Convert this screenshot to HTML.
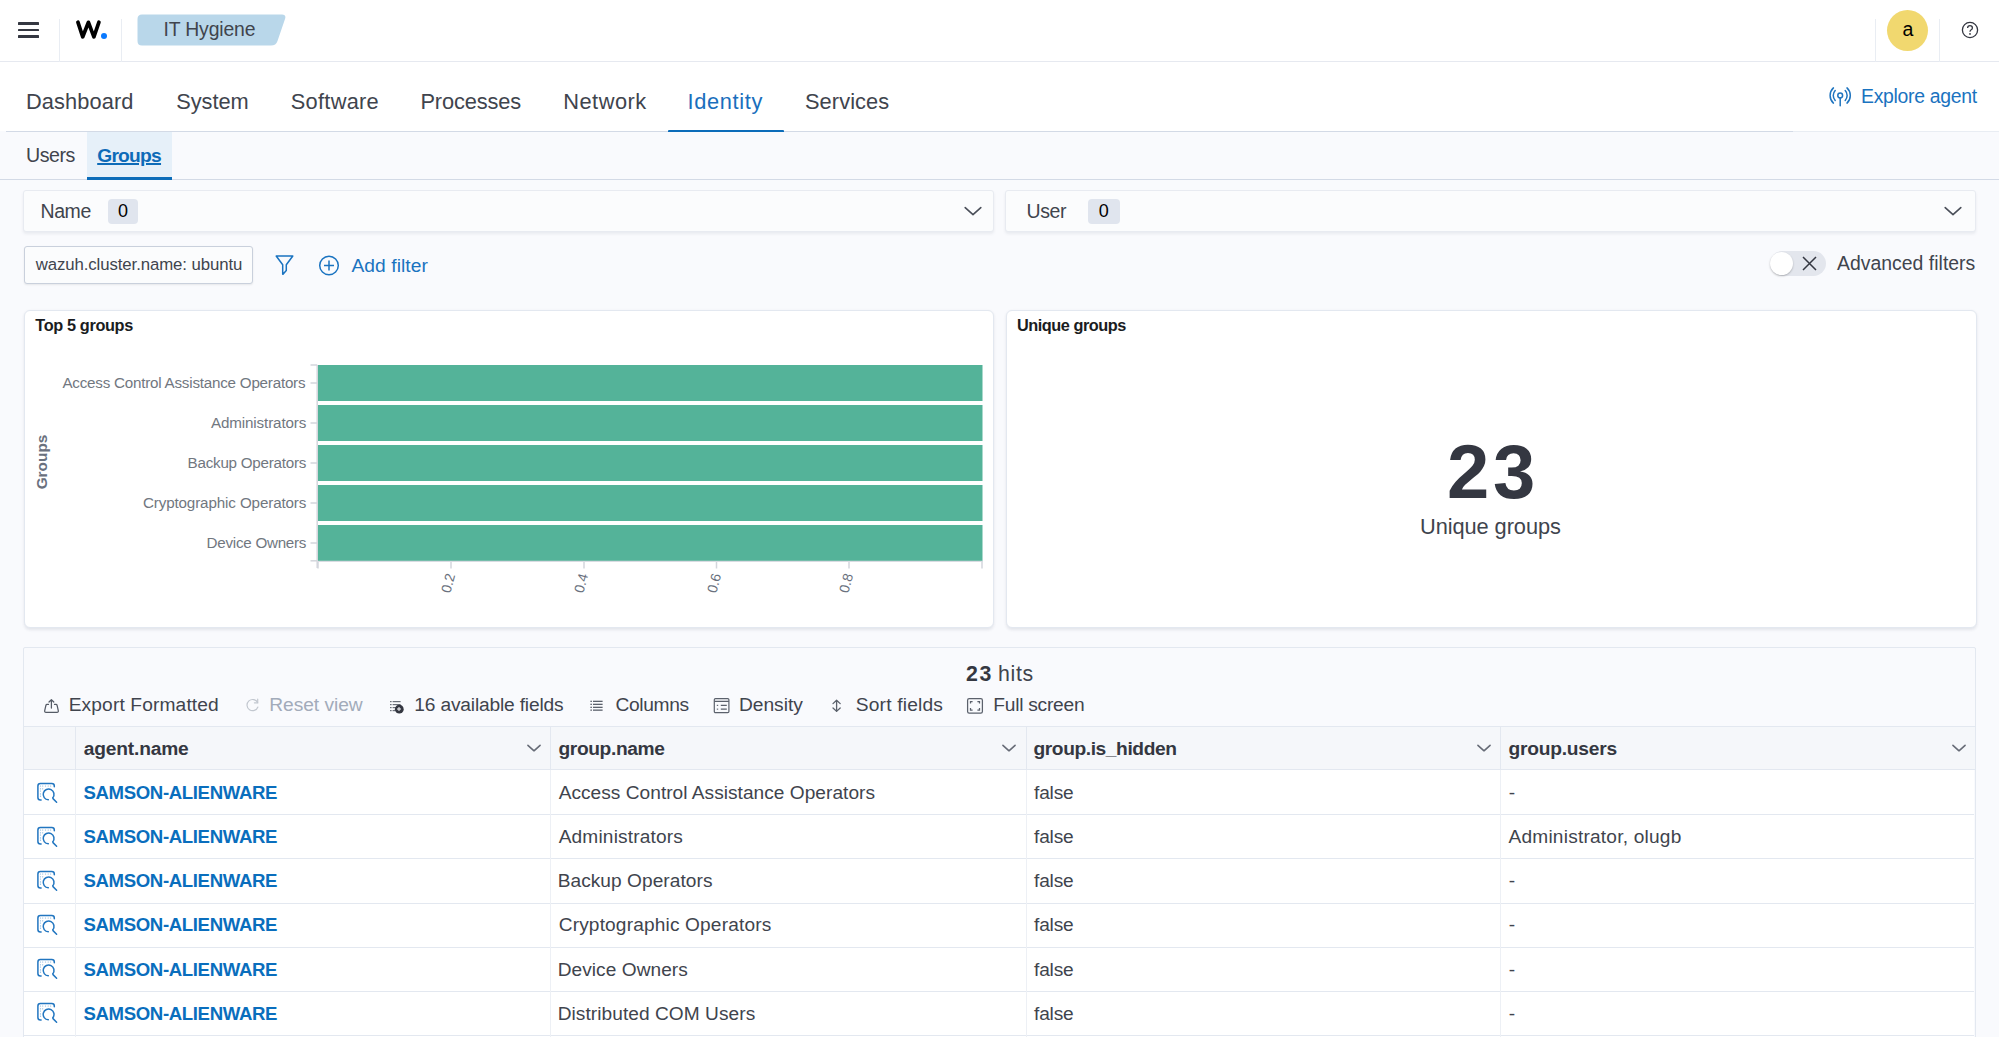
<!DOCTYPE html>
<html><head><meta charset="utf-8"><title>IT Hygiene</title>
<style>
html,body{margin:0;padding:0;}
body{width:1999px;height:1037px;overflow:hidden;position:relative;background:#f9fafd;font-family:"Liberation Sans",sans-serif;}
.t{position:absolute;white-space:nowrap;line-height:1;}
.b{position:absolute;}
</style></head><body>
<div class="b" style="left:0px;top:0px;width:1999px;height:61.2px;background:#fff;"></div>
<div class="b" style="left:0px;top:61.2px;width:1999px;height:1.6px;background:#e6e9f0;"></div>
<div class="b" style="left:18px;top:22.3px;width:21px;height:2.6px;background:#343741;border-radius:0.6px;"></div>
<div class="b" style="left:18px;top:28.8px;width:21px;height:2.6px;background:#343741;border-radius:0.6px;"></div>
<div class="b" style="left:18px;top:35.3px;width:21px;height:2.6px;background:#343741;border-radius:0.6px;"></div>
<div class="b" style="left:59px;top:19px;width:1px;height:43px;background:#e9edf3;"></div>
<div class="b" style="left:121px;top:19px;width:1px;height:43px;background:#e9edf3;"></div>
<svg class="b" style="left:0;top:0" width="120" height="60" viewBox="0 0 120 60"><path d="M77.9 22.2 L82.75 36.8 L88.45 22.3 L93.9 36.8 L98.95 22.2" fill="none" stroke="#000" stroke-width="3.7" stroke-linecap="round" stroke-linejoin="round"/></svg>
<div class="b" style="left:100.7px;top:32.9px;width:6.2px;height:6.2px;background:#0a79ff;border-radius:50%;"></div>
<svg class="b" style="left:137px;top:14px" width="152" height="32" viewBox="0 0 152 32"><path d="M5 0.5 H145 Q149.5 0.5 148 5 L140.5 27 Q139 31.5 134 31.5 H5 Q0.5 31.5 0.5 27 V5 Q0.5 0.5 5 0.5 Z" fill="#b9d7ea"/></svg>
<div class="t tt" style="left:163.50px;top:20.01px;font-size:19.4px;color:#40444d;letter-spacing:-0.164px;">IT Hygiene</div><div class="b" style="left:1875px;top:19px;width:1px;height:43px;background:#e9edf3;"></div>
<div class="b" style="left:1939px;top:19px;width:1px;height:43px;background:#e9edf3;"></div>
<div class="b" style="left:1887px;top:9.5px;width:41px;height:41px;background:#f1d86f;border-radius:50%;"></div>
<div class="t tt" style="left:1902.40px;top:20.21px;font-size:19.5px;color:#000;">a</div><svg class="b" style="left:1961px;top:21px" width="18" height="18" viewBox="0 0 18 18"><circle cx="9" cy="9" r="7.6" fill="none" stroke="#343741" stroke-width="1.3"/><path d="M6.6 7.1 Q6.6 4.7 9 4.7 Q11.4 4.7 11.4 6.9 Q11.4 8.3 9.9 9 Q9 9.5 9 10.8" fill="none" stroke="#343741" stroke-width="1.3"/><circle cx="9" cy="12.9" r="0.9" fill="#343741"/></svg>
<div class="b" style="left:0px;top:62px;width:1999px;height:69px;background:#fff;"></div>
<div class="b" style="left:6px;top:130.8px;width:1787px;height:1.4px;background:#d3dae6;"></div>
<div class="b" style="left:1793px;top:130.8px;width:206px;height:1.4px;background:#e9edf3;"></div>
<div class="t tt" style="left:26.00px;top:90.71px;font-size:21.8px;color:#40444d;letter-spacing:0.099px;">Dashboard</div><div class="t tt" style="left:176.20px;top:90.71px;font-size:21.8px;color:#40444d;letter-spacing:-0.043px;">System</div><div class="t tt" style="left:290.80px;top:90.71px;font-size:21.8px;color:#40444d;letter-spacing:0.272px;">Software</div><div class="t tt" style="left:420.40px;top:90.71px;font-size:21.8px;color:#40444d;letter-spacing:-0.132px;">Processes</div><div class="t tt" style="left:563.25px;top:90.71px;font-size:21.8px;color:#40444d;letter-spacing:0.493px;">Network</div><div class="t tt" style="left:687.50px;top:90.71px;font-size:21.8px;color:#1a6fbd;letter-spacing:0.660px;">Identity</div><div class="t tt" style="left:805.00px;top:90.71px;font-size:21.8px;color:#40444d;letter-spacing:0.081px;">Services</div><div class="b" style="left:668px;top:130px;width:116px;height:2.5px;background:#0b6cb9;border-radius:1px;"></div>
<svg class="b" style="left:1829px;top:87px" width="23" height="20" viewBox="0 0 23 20"><g fill="none" stroke="#1f74bf" stroke-width="1.5" stroke-linecap="round"><path d="M4.4 0.9 A10.4 10.4 0 0 0 4.4 16.1"/><path d="M18 0.9 A10.4 10.4 0 0 1 18 16.1"/><path d="M6.2 3.6 A7.17 7.17 0 0 0 6.2 13.4"/><path d="M16.2 3.6 A7.17 7.17 0 0 1 16.2 13.4"/><circle cx="11.2" cy="8.5" r="2.4"/><path d="M11.2 10.9 V18.8"/></g></svg>
<div class="t tt" style="left:1861.00px;top:86.60px;font-size:19.4px;color:#1a73c0;letter-spacing:-0.298px;">Explore agent</div><div class="b" style="left:0px;top:132px;width:1999px;height:47px;background:#f9fafd;"></div>
<div class="b" style="left:87px;top:132px;width:85px;height:46px;background:#e6f0f9;"></div>
<div class="b" style="left:0px;top:178.8px;width:1999px;height:1.4px;background:#d3dae6;"></div>
<div class="b" style="left:87px;top:177px;width:85px;height:3px;background:#0b6cb9;"></div>
<div class="t tt" style="left:26.00px;top:146.21px;font-size:19.6px;color:#40444d;letter-spacing:-0.467px;">Users</div><div class="t tt" style="left:97.20px;top:146.20px;font-size:19.2px;color:#0d6bb8;font-weight:bold;letter-spacing:-0.731px;text-decoration:underline;text-underline-offset:1px;text-decoration-thickness:1.5px;">Groups</div><div class="b" style="left:23.2px;top:190px;width:970.5px;height:42px;background:#fbfcfd;border:1px solid #e8ebf1;border-radius:3px;box-shadow:0 2px 3px rgba(50,60,90,0.08);box-sizing:border-box;"></div>
<div class="b" style="left:1004.7px;top:190px;width:971px;height:42px;background:#fbfcfd;border:1px solid #e8ebf1;border-radius:3px;box-shadow:0 2px 3px rgba(50,60,90,0.08);box-sizing:border-box;"></div>
<div class="t tt" style="left:40.50px;top:201.61px;font-size:19.5px;color:#40444d;letter-spacing:-0.424px;">Name</div><div class="b" style="left:108px;top:198.5px;width:30px;height:25.5px;background:#e0e5ee;border-radius:4px;"></div>
<div class="t tt" style="left:123px;transform:translateX(-50%);top:202.21px;font-size:18px;color:#000;">0</div><div class="t tt" style="left:1026.50px;top:201.61px;font-size:19.5px;color:#40444d;letter-spacing:-0.392px;">User</div><div class="b" style="left:1088px;top:198.5px;width:31.5px;height:25.5px;background:#e0e5ee;border-radius:4px;"></div>
<div class="t tt" style="left:1103.7px;transform:translateX(-50%);top:202.21px;font-size:18px;color:#000;">0</div><svg class="b" style="left:964px;top:206px" width="18" height="10" viewBox="0 0 18 10"><path d="M1.2 1.6 L9 8.6 L16.8 1.6" fill="none" stroke="#4a4f59" stroke-width="1.6" stroke-linecap="round" stroke-linejoin="round"/></svg>
<svg class="b" style="left:1944px;top:206px" width="18" height="10" viewBox="0 0 18 10"><path d="M1.2 1.6 L9 8.6 L16.8 1.6" fill="none" stroke="#4a4f59" stroke-width="1.6" stroke-linecap="round" stroke-linejoin="round"/></svg>
<div class="b" style="left:24px;top:245.5px;width:229px;height:38px;background:#fbfcfd;border:1px solid #c9d0dc;border-radius:3px;box-shadow:0 1px 2px rgba(0,0,0,0.08);box-sizing:border-box;"></div>
<div class="t tt" style="left:35.70px;top:257.00px;font-size:16.8px;color:#40444d;letter-spacing:-0.093px;">wazuh.cluster.name: ubuntu</div><svg class="b" style="left:274px;top:254px" width="21" height="22" viewBox="0 0 21 22"><path d="M2.2 2 H18.8 L12.3 10.8 V16.5 L9.2 20 Q8.8 20.5 8.7 19.8 V10.8 Z" fill="none" stroke="#1a73c0" stroke-width="1.5" stroke-linejoin="round"/></svg>
<svg class="b" style="left:318px;top:255px" width="22" height="22" viewBox="0 0 22 22"><circle cx="11" cy="10.5" r="9.3" fill="none" stroke="#1a73c0" stroke-width="1.5"/><path d="M11 5.5 V15.5 M6 10.5 H16" stroke="#1a73c0" stroke-width="1.5"/></svg>
<div class="t tt" style="left:351.50px;top:256.20px;font-size:19.2px;color:#1a73c0;letter-spacing:0.074px;">Add filter</div><div class="b" style="left:1770px;top:250.5px;width:56px;height:25px;background:#e3e6ed;border-radius:13px;"></div>
<div class="b" style="left:1770px;top:251.5px;width:23px;height:23px;background:#fff;border-radius:50%;box-shadow:0 1px 2px rgba(0,0,0,0.25);"></div>
<svg class="b" style="left:1802px;top:256px" width="15" height="15" viewBox="0 0 15 15"><path d="M1 1 L14 14 M14 1 L1 14" stroke="#343741" stroke-width="1.5"/></svg>
<div class="t tt" style="left:1837.00px;top:254.10px;font-size:19.4px;color:#40444d;letter-spacing:0.022px;">Advanced filters</div><div class="b" style="left:23.5px;top:310px;width:970.2px;height:318px;background:#fff;border:1px solid #e3e8f0;border-radius:6px;box-sizing:border-box;box-shadow:0 1.5px 3px rgba(40,50,80,0.10);"></div>
<div class="b" style="left:1005.5px;top:310px;width:971.5px;height:318px;background:#fff;border:1px solid #e3e8f0;border-radius:6px;box-sizing:border-box;box-shadow:0 1.5px 3px rgba(40,50,80,0.10);"></div>
<div class="t tt" style="left:35.30px;top:317.30px;font-size:16.3px;color:#1a1c21;font-weight:bold;letter-spacing:-0.359px;">Top 5 groups</div><div class="t tt" style="left:1017.00px;top:317.30px;font-size:16.3px;color:#1a1c21;font-weight:bold;letter-spacing:-0.464px;">Unique groups</div><svg class="b" style="left:0;top:0" width="1000" height="627" viewBox="0 0 1000 627"><g stroke="#d3d6dc" stroke-width="1.5"><path d="M317.2 365 V568"/><path d="M310.5 365 H317.2"/><path d="M310.5 383 H317.2"/><path d="M310.5 423 H317.2"/><path d="M310.5 463 H317.2"/><path d="M310.5 503 H317.2"/><path d="M310.5 543 H317.2"/><path d="M310.5 560.8 H317.2"/><path d="M318 561 V568.5"/><path d="M451 561 V568.5"/><path d="M584 561 V568.5"/><path d="M716.5 561 V568.5"/><path d="M849 561 V568.5"/><path d="M982 561 V568.5"/></g><rect x="318" y="365" width="664.5" height="36" fill="#54b399"/><rect x="318" y="405" width="664.5" height="36" fill="#54b399"/><rect x="318" y="445" width="664.5" height="36" fill="#54b399"/><rect x="318" y="485" width="664.5" height="36" fill="#54b399"/><rect x="318" y="525" width="664.5" height="36" fill="#54b399"/><path d="M317 561.3 H983" stroke="#d9dce2" stroke-width="1.3"/></svg>
<div class="t tt" style="left:62.40px;top:375.11px;font-size:15.2px;color:#71777f;letter-spacing:-0.222px;">Access Control Assistance Operators</div><div class="t tt" style="left:210.90px;top:415.11px;font-size:15.2px;color:#71777f;letter-spacing:-0.120px;">Administrators</div><div class="t tt" style="left:187.60px;top:455.11px;font-size:15.2px;color:#71777f;letter-spacing:-0.241px;">Backup Operators</div><div class="t tt" style="left:142.90px;top:495.11px;font-size:15.2px;color:#71777f;letter-spacing:-0.127px;">Cryptographic Operators</div><div class="t tt" style="left:206.60px;top:535.11px;font-size:15.2px;color:#71777f;letter-spacing:-0.265px;">Device Owners</div><div class="t" style="left:42px;top:462px;font-size:15.4px;font-weight:bold;color:#69707d;line-height:1;transform:translate(-50%,-50%) rotate(-90deg);">Groups</div>
<div class="t" style="left:448px;top:583px;font-size:14px;color:#69707d;line-height:1;transform:translate(-50%,-50%) rotate(-75deg);">0.2</div>
<div class="t" style="left:581px;top:583px;font-size:14px;color:#69707d;line-height:1;transform:translate(-50%,-50%) rotate(-75deg);">0.4</div>
<div class="t" style="left:713.5px;top:583px;font-size:14px;color:#69707d;line-height:1;transform:translate(-50%,-50%) rotate(-75deg);">0.6</div>
<div class="t" style="left:846px;top:583px;font-size:14px;color:#69707d;line-height:1;transform:translate(-50%,-50%) rotate(-75deg);">0.8</div>
<div class="t tt" style="left:1447.00px;top:434.40px;font-size:76px;color:#343741;font-weight:bold;letter-spacing:3.732px;">23</div><div class="t tt" style="left:1420.00px;top:515.61px;font-size:21.8px;color:#40444d;letter-spacing:-0.073px;">Unique groups</div><div class="b" style="left:23.3px;top:647.2px;width:1952.7px;height:400px;background:#f9fafd;border:1px solid #e3e8f0;border-radius:2px;box-sizing:border-box;"></div>
<div class="t tt" style="left:966.10px;top:664.30px;font-size:21.3px;color:#343741;font-weight:bold;letter-spacing:1.656px;">23</div><div class="t tt" style="left:998.10px;top:664.30px;font-size:21.3px;color:#40444d;letter-spacing:0.636px;">hits</div><div class="t tt" style="left:68.70px;top:695.40px;font-size:19.2px;color:#40444d;letter-spacing:0.123px;">Export Formatted</div><div class="t tt" style="left:269.30px;top:695.40px;font-size:19.2px;color:#a2abba;letter-spacing:-0.054px;">Reset view</div><div class="t tt" style="left:414.30px;top:695.40px;font-size:19.2px;color:#40444d;letter-spacing:-0.180px;">16 available fields</div><div class="t tt" style="left:615.50px;top:695.40px;font-size:19.2px;color:#40444d;letter-spacing:-0.353px;">Columns</div><div class="t tt" style="left:739.00px;top:695.40px;font-size:19.2px;color:#40444d;letter-spacing:-0.031px;">Density</div><div class="t tt" style="left:855.80px;top:695.40px;font-size:19.2px;color:#40444d;letter-spacing:0.178px;">Sort fields</div><div class="t tt" style="left:993.30px;top:695.40px;font-size:19.2px;color:#40444d;letter-spacing:-0.257px;">Full screen</div><svg class="b" style="left:43px;top:698px" width="18" height="16" viewBox="0 0 18 16"><g fill="none" stroke="#555b66" stroke-width="1.25" stroke-linecap="round" stroke-linejoin="round"><path d="M8.4 10 V1.6 M6 4 L8.4 1.6 L10.8 4"/><path d="M5.5 6.4 H4 Q3.1 6.4 2.9 7.3 L1.7 12.6 Q1.4 14.3 3 14.3 H14 Q15.6 14.3 15.3 12.6 L14.1 7.3 Q13.9 6.4 13 6.4 H11.5"/></g></svg>
<svg class="b" style="left:245px;top:698px" width="15" height="15" viewBox="0 0 15 15"><g fill="none" stroke="#c2c7cf" stroke-width="1.2" stroke-linecap="round"><path d="M12.6 4.5 A5.6 5.6 0 1 0 12.9 9"/><path d="M12.7 1.2 V4.8 H9.4"/></g></svg>
<svg class="b" style="left:389px;top:700px" width="16" height="14" viewBox="0 0 16 14"><g fill="#6b707a"><rect x="1" y="1" width="1.6" height="1.2"/><rect x="3.6" y="1" width="8" height="1.2"/><rect x="1" y="4" width="1.6" height="1.2"/><rect x="3.6" y="4" width="8" height="1.2"/><rect x="1" y="7" width="1.6" height="1.2"/><rect x="3.6" y="7" width="4" height="1.2"/><rect x="1" y="10" width="1.6" height="1.2"/><rect x="3.6" y="10" width="3" height="1.2"/></g><circle cx="10.3" cy="9.2" r="4.4" fill="#343741"/><path d="M10 7 V11 M8 9 H12" stroke="#f7f8fc" stroke-width="1"/></svg>
<svg class="b" style="left:590px;top:700px" width="14" height="12" viewBox="0 0 14 12"><g fill="#5b616c"><rect x="0.4" y="0.7" width="1.5" height="1.3"/><rect x="3" y="0.7" width="9.6" height="1.3"/><rect x="0.4" y="3.7" width="1.5" height="1.3"/><rect x="3" y="3.7" width="9.6" height="1.3"/><rect x="0.4" y="6.7" width="1.5" height="1.3"/><rect x="3" y="6.7" width="9.6" height="1.3"/><rect x="0.4" y="9.5" width="1.5" height="1.3"/><rect x="3" y="9.5" width="9.6" height="1.3"/></g></svg>
<svg class="b" style="left:713px;top:697px" width="18" height="17" viewBox="0 0 18 17"><g fill="none" stroke="#5b616c" stroke-width="1.2"><rect x="1.3" y="1.6" width="14.6" height="14" rx="1.2"/><path d="M1.3 4.4 H15.9 M7.8 8.3 H13.8 M7.8 12.1 H13.8"/></g><g fill="#5b616c"><rect x="3.8" y="7.8" width="1.4" height="1.1"/><rect x="3.8" y="11.6" width="1.4" height="1.1"/></g></svg>
<svg class="b" style="left:830px;top:698px" width="13" height="16" viewBox="0 0 13 16"><g fill="none" stroke="#5b616c" stroke-width="1.3" stroke-linecap="round" stroke-linejoin="round"><path d="M6.6 2.2 V13.4 M3 5.6 L6.6 2.2 L10.2 5.6 M3 10 L6.6 13.4 L10.2 10"/></g></svg>
<svg class="b" style="left:966px;top:697px" width="18" height="17" viewBox="0 0 18 17"><g fill="none" stroke="#5b616c" stroke-width="1.25"><rect x="1.6" y="1.6" width="14.8" height="14.6" rx="1.6"/><path d="M4.5 6.6 V4.6 H6.6 M11.4 4.6 H13.5 V6.6 M13.5 11 V13 H11.4 M6.6 13 H4.5 V11"/></g></svg>
<div class="b" style="left:24.3px;top:726px;width:1950.7px;height:44px;background:#f5f7fa;border-top:1px solid #e3e8f0;border-bottom:1px solid #e3e8f0;box-sizing:border-box;"></div>
<div class="b" style="left:24.3px;top:770px;width:1950px;height:280px;background:#fff;"></div>
<div class="b" style="left:24.3px;top:814.2px;width:1950px;height:1px;background:#e3e8f0;"></div>
<div class="b" style="left:24.3px;top:858.4px;width:1950px;height:1px;background:#e3e8f0;"></div>
<div class="b" style="left:24.3px;top:902.5px;width:1950px;height:1px;background:#e3e8f0;"></div>
<div class="b" style="left:24.3px;top:946.7px;width:1950px;height:1px;background:#e3e8f0;"></div>
<div class="b" style="left:24.3px;top:990.8px;width:1950px;height:1px;background:#e3e8f0;"></div>
<div class="b" style="left:24.3px;top:1035.0px;width:1950px;height:1px;background:#e3e8f0;"></div>
<div class="b" style="left:74.7px;top:727px;width:1px;height:42px;background:#e3e8f0;"></div>
<div class="b" style="left:74.7px;top:770px;width:1px;height:280px;background:#edf0f5;"></div>
<div class="b" style="left:549.7px;top:727px;width:1px;height:42px;background:#e3e8f0;"></div>
<div class="b" style="left:549.7px;top:770px;width:1px;height:280px;background:#edf0f5;"></div>
<div class="b" style="left:1025.5px;top:727px;width:1px;height:42px;background:#e3e8f0;"></div>
<div class="b" style="left:1025.5px;top:770px;width:1px;height:280px;background:#edf0f5;"></div>
<div class="b" style="left:1499.5px;top:727px;width:1px;height:42px;background:#e3e8f0;"></div>
<div class="b" style="left:1499.5px;top:770px;width:1px;height:280px;background:#edf0f5;"></div>
<div class="b" style="left:1975px;top:648px;width:1px;height:400px;background:#e3e8f0;"></div>
<div class="t tt" style="left:83.80px;top:738.51px;font-size:19.2px;color:#343741;font-weight:bold;letter-spacing:-0.195px;">agent.name</div><div class="t tt" style="left:558.50px;top:738.51px;font-size:19.2px;color:#343741;font-weight:bold;letter-spacing:-0.381px;">group.name</div><div class="t tt" style="left:1033.50px;top:738.51px;font-size:19.2px;color:#343741;font-weight:bold;letter-spacing:-0.415px;">group.is_hidden</div><div class="t tt" style="left:1508.50px;top:738.51px;font-size:19.2px;color:#343741;font-weight:bold;letter-spacing:-0.231px;">group.users</div><svg class="b" style="left:526.5px;top:744px" width="14" height="8" viewBox="0 0 18 10"><path d="M1.2 1.6 L9 8.6 L16.8 1.6" fill="none" stroke="#666b76" stroke-width="2" stroke-linecap="round" stroke-linejoin="round" stroke-linecap="round" stroke-linejoin="round"/></svg>
<svg class="b" style="left:1001.5px;top:744px" width="14" height="8" viewBox="0 0 18 10"><path d="M1.2 1.6 L9 8.6 L16.8 1.6" fill="none" stroke="#666b76" stroke-width="2" stroke-linecap="round" stroke-linejoin="round" stroke-linecap="round" stroke-linejoin="round"/></svg>
<svg class="b" style="left:1476.5px;top:744px" width="14" height="8" viewBox="0 0 18 10"><path d="M1.2 1.6 L9 8.6 L16.8 1.6" fill="none" stroke="#666b76" stroke-width="2" stroke-linecap="round" stroke-linejoin="round" stroke-linecap="round" stroke-linejoin="round"/></svg>
<svg class="b" style="left:1951.5px;top:744px" width="14" height="8" viewBox="0 0 18 10"><path d="M1.2 1.6 L9 8.6 L16.8 1.6" fill="none" stroke="#666b76" stroke-width="2" stroke-linecap="round" stroke-linejoin="round" stroke-linecap="round" stroke-linejoin="round"/></svg>
<div class="t tt" style="left:83.50px;top:784.00px;font-size:18.6px;color:#0a6ebd;font-weight:bold;letter-spacing:-0.364px;">SAMSON-ALIENWARE</div><div class="t tt" style="left:558.70px;top:783.01px;font-size:19.1px;color:#40444d;letter-spacing:0.033px;">Access Control Assistance Operators</div><div class="t tt" style="left:1034.00px;top:783.01px;font-size:19.1px;color:#40444d;letter-spacing:-0.178px;">false</div><div class="t tt" style="left:1508.70px;top:783.01px;font-size:19.1px;color:#40444d;">-</div><svg class="b" style="left:36px;top:781.5px" width="22" height="22" viewBox="0 0 22 22"><g fill="none" stroke="#2276c0" stroke-width="1.5" stroke-linecap="round"><path d="M5.1 18 H4.4 Q1.9 18 1.9 15.5 V4 Q1.9 1.5 4.4 1.5 H15.8 Q18.3 1.5 18.3 4 V4.8"/><path d="M12.3 17.8 A5.4 5.4 0 1 1 16.8 15.8"/><path d="M17 16.6 L20.6 20.2"/></g><g fill="#2276c0" opacity="0.55"><circle cx="4.5" cy="4" r="0.6"/><circle cx="6.7" cy="4" r="0.6"/><circle cx="9.5" cy="4" r="0.6"/><circle cx="12.2" cy="4" r="0.6"/><circle cx="14.6" cy="4" r="0.6"/><circle cx="4.5" cy="6.8" r="0.6"/><circle cx="6.7" cy="6.8" r="0.6"/><circle cx="4.5" cy="9" r="0.6"/><circle cx="4.5" cy="11.9" r="0.6"/><circle cx="4.5" cy="14.2" r="0.6"/></g></svg>
<div class="t tt" style="left:83.50px;top:828.17px;font-size:18.6px;color:#0a6ebd;font-weight:bold;letter-spacing:-0.364px;">SAMSON-ALIENWARE</div><div class="t tt" style="left:558.70px;top:827.17px;font-size:19.1px;color:#40444d;letter-spacing:0.164px;">Administrators</div><div class="t tt" style="left:1034.00px;top:827.17px;font-size:19.1px;color:#40444d;letter-spacing:-0.178px;">false</div><div class="t tt" style="left:1508.50px;top:827.17px;font-size:19.1px;color:#40444d;letter-spacing:0.214px;">Administrator, olugb</div><svg class="b" style="left:36px;top:825.7px" width="22" height="22" viewBox="0 0 22 22"><g fill="none" stroke="#2276c0" stroke-width="1.5" stroke-linecap="round"><path d="M5.1 18 H4.4 Q1.9 18 1.9 15.5 V4 Q1.9 1.5 4.4 1.5 H15.8 Q18.3 1.5 18.3 4 V4.8"/><path d="M12.3 17.8 A5.4 5.4 0 1 1 16.8 15.8"/><path d="M17 16.6 L20.6 20.2"/></g><g fill="#2276c0" opacity="0.55"><circle cx="4.5" cy="4" r="0.6"/><circle cx="6.7" cy="4" r="0.6"/><circle cx="9.5" cy="4" r="0.6"/><circle cx="12.2" cy="4" r="0.6"/><circle cx="14.6" cy="4" r="0.6"/><circle cx="4.5" cy="6.8" r="0.6"/><circle cx="6.7" cy="6.8" r="0.6"/><circle cx="4.5" cy="9" r="0.6"/><circle cx="4.5" cy="11.9" r="0.6"/><circle cx="4.5" cy="14.2" r="0.6"/></g></svg>
<div class="t tt" style="left:83.50px;top:872.33px;font-size:18.6px;color:#0a6ebd;font-weight:bold;letter-spacing:-0.364px;">SAMSON-ALIENWARE</div><div class="t tt" style="left:557.70px;top:871.32px;font-size:19.1px;color:#40444d;letter-spacing:0.057px;">Backup Operators</div><div class="t tt" style="left:1034.00px;top:871.32px;font-size:19.1px;color:#40444d;letter-spacing:-0.178px;">false</div><div class="t tt" style="left:1508.70px;top:871.32px;font-size:19.1px;color:#40444d;">-</div><svg class="b" style="left:36px;top:869.8px" width="22" height="22" viewBox="0 0 22 22"><g fill="none" stroke="#2276c0" stroke-width="1.5" stroke-linecap="round"><path d="M5.1 18 H4.4 Q1.9 18 1.9 15.5 V4 Q1.9 1.5 4.4 1.5 H15.8 Q18.3 1.5 18.3 4 V4.8"/><path d="M12.3 17.8 A5.4 5.4 0 1 1 16.8 15.8"/><path d="M17 16.6 L20.6 20.2"/></g><g fill="#2276c0" opacity="0.55"><circle cx="4.5" cy="4" r="0.6"/><circle cx="6.7" cy="4" r="0.6"/><circle cx="9.5" cy="4" r="0.6"/><circle cx="12.2" cy="4" r="0.6"/><circle cx="14.6" cy="4" r="0.6"/><circle cx="4.5" cy="6.8" r="0.6"/><circle cx="6.7" cy="6.8" r="0.6"/><circle cx="4.5" cy="9" r="0.6"/><circle cx="4.5" cy="11.9" r="0.6"/><circle cx="4.5" cy="14.2" r="0.6"/></g></svg>
<div class="t tt" style="left:83.50px;top:916.49px;font-size:18.6px;color:#0a6ebd;font-weight:bold;letter-spacing:-0.364px;">SAMSON-ALIENWARE</div><div class="t tt" style="left:558.70px;top:915.48px;font-size:19.1px;color:#40444d;letter-spacing:0.158px;">Cryptographic Operators</div><div class="t tt" style="left:1034.00px;top:915.48px;font-size:19.1px;color:#40444d;letter-spacing:-0.178px;">false</div><div class="t tt" style="left:1508.70px;top:915.48px;font-size:19.1px;color:#40444d;">-</div><svg class="b" style="left:36px;top:914.0px" width="22" height="22" viewBox="0 0 22 22"><g fill="none" stroke="#2276c0" stroke-width="1.5" stroke-linecap="round"><path d="M5.1 18 H4.4 Q1.9 18 1.9 15.5 V4 Q1.9 1.5 4.4 1.5 H15.8 Q18.3 1.5 18.3 4 V4.8"/><path d="M12.3 17.8 A5.4 5.4 0 1 1 16.8 15.8"/><path d="M17 16.6 L20.6 20.2"/></g><g fill="#2276c0" opacity="0.55"><circle cx="4.5" cy="4" r="0.6"/><circle cx="6.7" cy="4" r="0.6"/><circle cx="9.5" cy="4" r="0.6"/><circle cx="12.2" cy="4" r="0.6"/><circle cx="14.6" cy="4" r="0.6"/><circle cx="4.5" cy="6.8" r="0.6"/><circle cx="6.7" cy="6.8" r="0.6"/><circle cx="4.5" cy="9" r="0.6"/><circle cx="4.5" cy="11.9" r="0.6"/><circle cx="4.5" cy="14.2" r="0.6"/></g></svg>
<div class="t tt" style="left:83.50px;top:960.64px;font-size:18.6px;color:#0a6ebd;font-weight:bold;letter-spacing:-0.364px;">SAMSON-ALIENWARE</div><div class="t tt" style="left:557.70px;top:959.65px;font-size:19.1px;color:#40444d;letter-spacing:0.058px;">Device Owners</div><div class="t tt" style="left:1034.00px;top:959.65px;font-size:19.1px;color:#40444d;letter-spacing:-0.178px;">false</div><div class="t tt" style="left:1508.70px;top:959.65px;font-size:19.1px;color:#40444d;">-</div><svg class="b" style="left:36px;top:958.1px" width="22" height="22" viewBox="0 0 22 22"><g fill="none" stroke="#2276c0" stroke-width="1.5" stroke-linecap="round"><path d="M5.1 18 H4.4 Q1.9 18 1.9 15.5 V4 Q1.9 1.5 4.4 1.5 H15.8 Q18.3 1.5 18.3 4 V4.8"/><path d="M12.3 17.8 A5.4 5.4 0 1 1 16.8 15.8"/><path d="M17 16.6 L20.6 20.2"/></g><g fill="#2276c0" opacity="0.55"><circle cx="4.5" cy="4" r="0.6"/><circle cx="6.7" cy="4" r="0.6"/><circle cx="9.5" cy="4" r="0.6"/><circle cx="12.2" cy="4" r="0.6"/><circle cx="14.6" cy="4" r="0.6"/><circle cx="4.5" cy="6.8" r="0.6"/><circle cx="6.7" cy="6.8" r="0.6"/><circle cx="4.5" cy="9" r="0.6"/><circle cx="4.5" cy="11.9" r="0.6"/><circle cx="4.5" cy="14.2" r="0.6"/></g></svg>
<div class="t tt" style="left:83.50px;top:1004.81px;font-size:18.6px;color:#0a6ebd;font-weight:bold;letter-spacing:-0.364px;">SAMSON-ALIENWARE</div><div class="t tt" style="left:557.70px;top:1003.81px;font-size:19.1px;color:#40444d;letter-spacing:0.063px;">Distributed COM Users</div><div class="t tt" style="left:1034.00px;top:1003.81px;font-size:19.1px;color:#40444d;letter-spacing:-0.178px;">false</div><div class="t tt" style="left:1508.70px;top:1003.81px;font-size:19.1px;color:#40444d;">-</div><svg class="b" style="left:36px;top:1002.3px" width="22" height="22" viewBox="0 0 22 22"><g fill="none" stroke="#2276c0" stroke-width="1.5" stroke-linecap="round"><path d="M5.1 18 H4.4 Q1.9 18 1.9 15.5 V4 Q1.9 1.5 4.4 1.5 H15.8 Q18.3 1.5 18.3 4 V4.8"/><path d="M12.3 17.8 A5.4 5.4 0 1 1 16.8 15.8"/><path d="M17 16.6 L20.6 20.2"/></g><g fill="#2276c0" opacity="0.55"><circle cx="4.5" cy="4" r="0.6"/><circle cx="6.7" cy="4" r="0.6"/><circle cx="9.5" cy="4" r="0.6"/><circle cx="12.2" cy="4" r="0.6"/><circle cx="14.6" cy="4" r="0.6"/><circle cx="4.5" cy="6.8" r="0.6"/><circle cx="6.7" cy="6.8" r="0.6"/><circle cx="4.5" cy="9" r="0.6"/><circle cx="4.5" cy="11.9" r="0.6"/><circle cx="4.5" cy="14.2" r="0.6"/></g></svg>

</body></html>
